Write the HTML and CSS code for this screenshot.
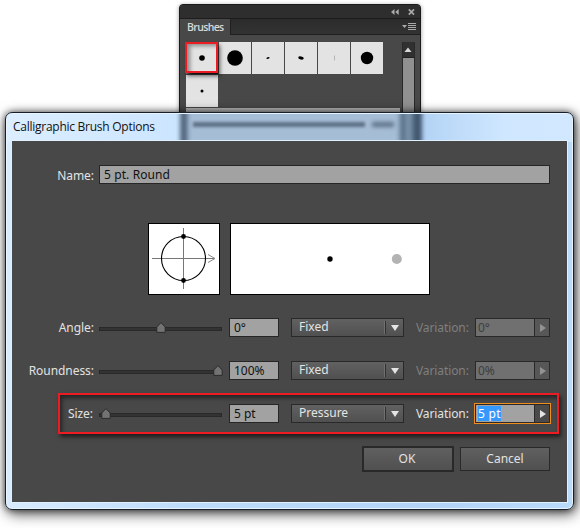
FILE: index.html
```html
<!DOCTYPE html>
<html lang="en">
<head>
<meta charset="utf-8">
<title>Calligraphic Brush Options</title>
<link rel="stylesheet" href="styles.css">
</head>
<body>
<div class="desktop">
  <section class="panel">
    <div class="panel-top">
      <svg width="8" height="6" viewBox="0 0 8 6"><path d="M3.5 0v6L0 3zM7.7 0v6L4.2 3z" fill="#aaa"/></svg>
      <svg width="7" height="6" viewBox="0 0 7 6"><path d="M.8 .4 6 5.6M6 .4.8 5.6" stroke="#aaa" stroke-width="1.7"/></svg>
    </div>
    <div class="tabs">
      <div class="tab">Brushes</div>
      <svg class="flyout" width="14" height="8" viewBox="0 0 14 8"><path d="M0 2h5L2.5 5zM6 0h8v1H6zM6 2h8v1H6zM6 4h8v1H6zM6 6h8v1H6z" fill="#aaa"/></svg>
    </div>
    <div class="panel-body">
      <div class="brushes">
        <div class="grid">
          <div class="cell first"><svg viewBox="0 0 32 32"><circle cx="16" cy="16" r="2.8"/></svg></div>
          <div class="cell"><svg viewBox="0 0 32 32"><circle cx="16" cy="16" r="7.8"/></svg></div>
          <div class="cell"><svg viewBox="0 0 32 32"><ellipse cx="16" cy="16" rx="1.7" ry=".8" transform="rotate(-20 16 16)"/></svg></div>
          <div class="cell"><svg viewBox="0 0 32 32"><ellipse cx="16" cy="16" rx="2.8" ry="1.5" transform="rotate(12 16 16)"/></svg></div>
          <div class="cell"><svg viewBox="0 0 32 32"><path d="M16.5 13.5v5" stroke="#aaa" stroke-width=".8"/></svg></div>
          <div class="cell"><svg viewBox="0 0 32 32"><circle cx="16" cy="16" r="6.2"/></svg></div>
          <div class="cell"><svg viewBox="0 0 32 32"><circle cx="16" cy="16" r="1.5"/></svg></div>
        </div>
        <div class="list-item"></div>
      </div>
      <div class="scroll"><div class="scroll-up"><svg width="8" height="5" viewBox="0 0 8 5"><path d="M4 .5 7.5 5h-7z" fill="#d6d6d6"/></svg></div></div>
    </div>
    <div class="mark brush-mark"></div>
  </section>

  <section class="dialog">
    <div class="glass"><i class="ghost"></i><i class="ghost-line"></i><i class="ghost-word"></i></div>
    <header class="title">Calligraphic Brush Options</header>
    <div class="content">
      <div class="row name-row"><label class="label">Name:</label><div class="field name">5 pt. Round</div></div>
      <div class="previews">
        <svg class="preview" width="72" height="72" viewBox="1 1 70 70">
          <path d="M35.5 5v61M4 35.5h62" stroke="#777" fill="none"/><path d="m60 31.5 7 4-7 4" stroke="#888" fill="none"/>
          <circle cx="35.5" cy="35.5" r="22" fill="none" stroke="#000" stroke-width="1.1"/><circle cx="35.5" cy="13.5" r="2.4"/><circle cx="35.5" cy="57.5" r="2.4"/>
        </svg>
        <svg class="preview" width="200" height="72" viewBox="1 1 198 70"><circle cx="100" cy="36" r="2.7"/><circle cx="166.8" cy="36" r="5" fill="#b3b3b3"/></svg>
      </div>
      <div class="row">
        <label class="label">Angle:</label>
        <div class="slider"><svg class="knob at-mid" width="10" height="11" viewBox="0 0 10 11"><path d="M5 .6 9.2 5v5.4H.8V5z"/></svg></div>
        <div class="field value">0°</div>
        <div class="select"><span>Fixed</span><i class="arrow"></i></div>
        <label class="variation dim">Variation:</label>
        <div class="combo off"><span>0°</span><i class="arrow"></i></div>
      </div>
      <div class="row">
        <label class="label">Roundness:</label>
        <div class="slider"><svg class="knob at-end" width="10" height="11" viewBox="0 0 10 11"><path d="M5 .6 9.2 5v5.4H.8V5z"/></svg></div>
        <div class="field value">100%</div>
        <div class="select"><span>Fixed</span><i class="arrow"></i></div>
        <label class="variation dim">Variation:</label>
        <div class="combo off"><span>0%</span><i class="arrow"></i></div>
      </div>
      <div class="row">
        <label class="label size">Size:</label>
        <div class="slider"><svg class="knob at-start" width="10" height="11" viewBox="0 0 10 11"><path d="M5 .6 9.2 5v5.4H.8V5z"/></svg></div>
        <div class="field value">5 pt</div>
        <div class="select"><span>Pressure</span><i class="arrow"></i></div>
        <label class="variation">Variation:</label>
        <div class="combo focus"><span><b>5 pt</b></span><i class="arrow"></i></div>
      </div>
      <div class="mark size-mark"></div>
      <footer class="buttons"><div class="button ok">OK</div><div class="button">Cancel</div></footer>
    </div>
  </section>
</div>
</body>
</html>
```
FILE: styles.css
```css
* { box-sizing: border-box; }
body { margin: 0; background: #fff; font: 12px/17px "Noto Sans", sans-serif; color: #e2e2e2; }
.desktop { position: relative; width: 580px; height: 528px; overflow: hidden; }
svg { display: block; }

.panel { position: absolute; left: 179px; top: 4px; width: 242px; height: 130px; border: 1px solid #1b1b1b; border-radius: 4px 4px 0 0; background: #484848; box-shadow: 0 1px 4px rgba(0,0,0,.4); }
.panel-top { display: flex; justify-content: flex-end; align-items: center; gap: 9px; height: 13px; padding-right: 5px; background: #2e2e2e; border-radius: 3px 3px 0 0; }
.tabs { display: flex; justify-content: space-between; height: 17px; border-top: 1px solid #1d1d1d; background: linear-gradient(#2c2c2c, #333); box-shadow: inset 0 -1px #1f1f1f; }
.tab { width: 51px; padding-left: 7px; border-right: 1px solid #202020; background: #484848; font: 600 10.5px/16px "Open Sans", sans-serif; letter-spacing: -.75px; letter-spacing: -.65px; color: #d8d8d8; }
.flyout { margin: 4px 4px 0 0; }
.panel-body { display: flex; justify-content: space-between; padding: 7px 5px 0 6px; }
.brushes { width: 214px; }
.grid { display: grid; grid-template-columns: repeat(6, 32px); grid-auto-rows: 32px; gap: 1px; }
.cell { background: #e3e3e3; }
.cell.first { box-shadow: inset 4px 4px 4px #888, inset 0 -1px #222; }
.list-item { width: 214px; height: 20px; margin-top: 1px; background: #b7b7b7; }
.scroll { width: 13px; height: 87px; background: #909090; border: solid #292929; border-width: 0 1px; }
.scroll-up { height: 16px; padding: 5px 1px; background: #303030; border-bottom: 1px solid #222; }
.mark { position: absolute; border: 2px solid #ed1c24; }
.brush-mark { left: 5px; top: 37px; width: 33px; height: 31px; box-shadow: 2px 3px 4px rgba(0,0,0,.6); }

.dialog { position: absolute; left: 5px; top: 112px; width: 569px; height: 398px; padding: 1px 6px 6px; border: 1px solid #17202a; border-radius: 7px; background: linear-gradient(90deg, #d8ebff, #bddcfb 32%, #b3d4f6 75%, #b9daf9); box-shadow: 0 0 7px rgba(0,0,0,.6), 2px 4px 14px rgba(0,0,0,.65), inset 0 0 0 1px #e8f5ff; }
.glass { position: absolute; left: 1px; top: 1px; width: 565px; height: 28px; overflow: hidden; border-radius: 5px 5px 0 0; background: linear-gradient(90deg, #dceeff, #cce5ff 30%, #a7caf0 48%, #b0d1f4 72%, #cfe7ff 88%, #d1e8ff); }
.ghost { position: absolute; left: 173px; top: -4px; width: 242px; height: 36px; filter: blur(2px); background: linear-gradient(90deg, #52677e 0 6px, #a6bdd6 9px 218px, #506780 222px 223px, #7890a8 226px 231px, #40566d 235px); }
.ghost-line { position: absolute; left: 186px; top: 8px; width: 172px; height: 5px; background: #5d7186; filter: blur(1.5px); }
.ghost-word { position: absolute; left: 365px; top: 8px; width: 22px; height: 5px; background: #5d7186; filter: blur(2px); }
.title { position: relative; height: 27px; padding-left: 1px; color: #111; font: 12px/26px "Open Sans", sans-serif; letter-spacing: -.26px; }
.content { position: relative; height: 361px; padding-top: 24px; background: #484848; outline: 1px solid #dff0ff; }
.row { display: flex; height: 19px; margin-bottom: 24px; }
.name-row { margin-bottom: 39px; }
.label { width: 82px; margin-right: 5px; text-align: right; line-height: 20px; letter-spacing: -.05px; }
.name-row .label { line-height: 22px; }
.label.size { padding-right: 1px; }
.field { height: 19px; border: 1px solid #262626; background: #a2a2a2; color: #111; padding-left: 4px; }
.name { width: 451px; letter-spacing: .1px; }
.previews { display: flex; gap: 10px; margin: 0 0 23px 136px; }
.preview { background: #fff; border: 1px solid #000; }
.slider { position: relative; width: 123px; height: 4px; margin: 9px 7px 0 0; border: 1px solid #292929; background: #333; }
.knob { position: absolute; top: -6px; fill: #737373; stroke: #2b2b2b; stroke-width: 1; }
.at-mid { left: 56px; }
.at-end { left: 113px; }
.at-start { left: 1px; }
.value { width: 50px; margin-right: 12px; }
.select { display: flex; width: 113px; margin-right: 12px; padding-left: 7px; border: 1px solid #292929; background: linear-gradient(#616161, #505050); color: #e4e4e4; line-height: 16px; }
.select span { flex: 1; }
.arrow { display: block; }
.select .arrow { width: 18px; margin: 2px 0; border-left: 1px solid #303030; box-shadow: -1px 0 #707070; }
.arrow::before { content: ""; display: block; width: 0; height: 0; border: solid transparent; }
.select .arrow::before { margin: 4px 0 0 5px; border-width: 6px 4px 0; border-top-color: #e4e4e4; }
.variation { width: 54px; margin-right: 5px; line-height: 20px; letter-spacing: -.1px; white-space: nowrap; }
.dim { color: #7f7f7f; }
.combo { display: flex; width: 75px; height: 19px; border: 1px solid #292929; background: #a2a2a2; color: #111; }
.combo span { flex: 1; padding-left: 2px; }
.combo .arrow { width: 15px; border-left: 1px solid #292929; background: #4a4a4a; }
.combo .arrow::before { margin: 5px 0 0 5px; border-width: 4px 0 4px 6px; border-left-color: #e4e4e4; }
.combo.off { background: #707070; color: #3d3d3d; }
.combo.off .arrow { background: #575757; }
.combo.off .arrow::before { border-left-color: #929292; }
.focus { outline: 1px solid #ef8e1c; }
.focus b { display: inline-block; height: 15px; margin-top: 1px; line-height: 15px; vertical-align: top; font-weight: 400; letter-spacing: .3px; background: #3399ff; color: #fff; }
.size-mark { left: 46px; top: 252px; width: 501px; height: 41px; box-shadow: 2px 3px 4px rgba(0,0,0,.6), inset 2px 3px 4px rgba(0,0,0,.5); }
.buttons { display: flex; align-items: center; gap: 6px; margin: -1px 0 0 350px; }
.button { width: 90px; height: 24px; border: 1px solid #292929; background: linear-gradient(#606060, #505050); text-align: center; line-height: 22px; }
.ok { width: 92px; height: 26px; border-width: 2px; padding-right: 2px; }
```
